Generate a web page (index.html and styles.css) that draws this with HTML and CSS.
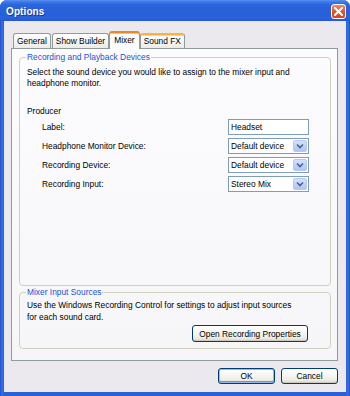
FILE: index.html
```html
<!DOCTYPE html>
<html>
<head>
<meta charset="utf-8">
<link rel="stylesheet" href="styles.css">
</head>
<body>
<div class="window">
  <div class="titlebar">
    <span class="title">Options</span>
    <span class="close"><svg width="9" height="9" viewBox="0 0 9 9"><path d="M1 1 L8 8 M8 1 L1 8" stroke="#fff" stroke-width="2" stroke-linecap="square"/></svg></span>
  </div>
  <div class="client">
    <div class="tabs">
      <div class="tab">General</div>
      <div class="tab">Show Builder</div>
      <div class="tab selected">Mixer</div>
      <div class="tab hot">Sound FX</div>
    </div>
    <div class="panel">
      <fieldset class="group g1">
        <legend>Recording and Playback Devices</legend>
        <p class="desc">Select the sound device you would like to assign to the mixer input and<br>headphone monitor.</p>
        <div class="producer">Producer</div>
        <div class="rows">
          <span class="lbl">Label:</span>
          <div class="field">Headset</div>
          <span class="lbl">Headphone Monitor Device:</span>
          <div class="field combo"><span class="val">Default device</span><span class="drop"><svg width="8" height="6" viewBox="0 0 8 6"><path d="M1 1.5 L4 4.5 L7 1.5" fill="none" stroke="#4d6185" stroke-width="1.6"/></svg></span></div>
          <span class="lbl">Recording Device:</span>
          <div class="field combo"><span class="val">Default device</span><span class="drop"><svg width="8" height="6" viewBox="0 0 8 6"><path d="M1 1.5 L4 4.5 L7 1.5" fill="none" stroke="#4d6185" stroke-width="1.6"/></svg></span></div>
          <span class="lbl">Recording Input:</span>
          <div class="field combo"><span class="val">Stereo Mix</span><span class="drop"><svg width="8" height="6" viewBox="0 0 8 6"><path d="M1 1.5 L4 4.5 L7 1.5" fill="none" stroke="#4d6185" stroke-width="1.6"/></svg></span></div>
        </div>
      </fieldset>
      <fieldset class="group g2">
        <legend>Mixer Input Sources</legend>
        <p class="desc2">Use the Windows Recording Control for settings to adjust input sources<br>for each sound card.</p>
        <div class="g2-actions"><button class="btn wide">Open Recording Properties</button></div>
      </fieldset>
    </div>
    <div class="buttons">
      <button class="btn default">OK</button>
      <button class="btn">Cancel</button>
    </div>
  </div>
</div>
</body>
</html>
```

FILE: styles.css
```css
* { box-sizing: border-box; }
html, body { margin: 0; padding: 0; background: #fff; }
body { font-family: "Liberation Sans", Arial, sans-serif; font-size: 8.4px; color: #000; }

.window {
  width: 350px;
  height: 396px;
  display: flex;
  flex-direction: column;
  background: linear-gradient(90deg, #1d4fcf 0, #3a72e0 2px, #2a60d8 4px, #2a60d8 346px, #3a72e0 348px, #1d4fcf 350px);
  border-radius: 7px 7px 0 0;
  overflow: hidden;
}

.titlebar {
  height: 21px;
  flex: none;
  display: flex;
  align-items: center;
  justify-content: space-between;
  padding: 0 4px 0 6px;
  background: linear-gradient(180deg, #5a93f0 0, #3a78e8 2px, #2b63dc 5px, #2860da 14px, #2a62dc 18px, #2458d4 21px);
}
.title {
  color: #fff;
  font-weight: bold;
  font-size: 10px;
  letter-spacing: 0.1px;
  text-shadow: 1px 1px 0 #123c9c;
  padding-top: 1px;
}
.close {
  width: 15px;
  height: 15px;
  margin-top: 1px;
  border: 1px solid #fff;
  border-radius: 3px;
  background: linear-gradient(180deg, #f08a68 0, #e2552f 50%, #d2481f 100%);
  display: flex;
  align-items: center;
  justify-content: center;
}

.client {
  flex: 1;
  margin: 0 4px 4px 4px;
  background: #ebe9ed;
  padding: 10px 8px 0 7px;
  display: flex;
  flex-direction: column;
}

.tabs {
  height: 17px;
  display: flex;
  align-items: flex-end;
  padding-left: 2px;
  gap: 1px;
  position: relative;
  z-index: 1;
}
.tab {
  height: 15px;
  padding: 0 3px;
  line-height: 14px;
  border: 1px solid #919b9c;
  border-bottom: none;
  border-radius: 3px 3px 0 0;
  background: linear-gradient(180deg, #ffffff 0, #f6f6f3 50%, #ecebe6 100%);
  white-space: nowrap;
}
.tab.hot {
  border-top: 2px solid #f8b33c;
  box-shadow: inset 0 1px 0 #ffd57a;
  line-height: 13px;
}
.tab.selected {
  height: 18px;
  margin: 0 -1px -1px -1px;
  padding: 0 4px;
  line-height: 15px;
  border-top: 2px solid #e68b2c;
  box-shadow: inset 0 1px 0 #ffc73c;
  background: #fcfcfe;
}

.panel {
  height: 313px;
  border: 1px solid #919b9c;
  background: linear-gradient(180deg, #fcfcfe 0, #f6f6f9 100%);
  padding: 3px 6px 11px 7px;
  display: flex;
  flex-direction: column;
  gap: 1px;
}

.group {
  margin: 0;
  padding: 0 7px 0 7px;
  border: 1px solid #d0d0bf;
  border-radius: 4px;
  min-width: 0;
}
.group legend {
  padding: 0 1px;
  margin-left: -1px;
  color: #1a52d4;
  line-height: 10px;
}
.g1 { flex: 1; }
.g2 { height: 62px; flex: none; }

.desc {
  margin: 5px 0 0 0;
  line-height: 11px;
}
.producer {
  margin-top: 17px;
  line-height: 11px;
}
.rows {
  margin-top: 2px;
  padding-left: 15px;
  display: grid;
  grid-template-columns: 186px 81px;
  grid-auto-rows: 16px;
  row-gap: 3px;
  align-items: center;
}
.field {
  height: 16px;
  border: 1px solid #7f9db9;
  background: #fff;
  padding-left: 2px;
  line-height: 14px;
  display: flex;
  align-items: center;
}
.field.combo { padding: 1px; }
.field .val { flex: 1; padding-left: 1px; }
.drop {
  width: 14px;
  height: 12px;
  border: 1px solid #b7c9f3;
  border-radius: 2px;
  background: linear-gradient(180deg, #d4e1fd 0, #bed0fa 60%, #b0c5f6 100%);
  display: flex;
  align-items: center;
  justify-content: center;
}

.desc2 {
  margin: 3px 0 0 0;
  line-height: 11.5px;
}
.g2-actions {
  display: flex;
  justify-content: flex-end;
  padding-right: 15px;
  margin-top: 2px;
}

.btn {
  font: inherit;
  color: #000;
  height: 17px;
  padding: 0;
  border: 1px solid #003c74;
  border-radius: 3px;
  background: linear-gradient(180deg, #ffffff 0, #f7f7f4 40%, #ecebe6 80%, #d8d4cb 100%);
  box-shadow: inset 0 -1px 0 #cdc9bf;
}
.btn.wide { width: 116px; }

.buttons {
  margin-top: 7px;
  display: flex;
  justify-content: flex-end;
  gap: 6px;
}
.buttons .btn { width: 57px; height: 16px; }
.btn.default {
  box-shadow: inset 0 0 0 1px #98b8ea, inset 0 -1px 0 1px #6d92dd;
}
```
